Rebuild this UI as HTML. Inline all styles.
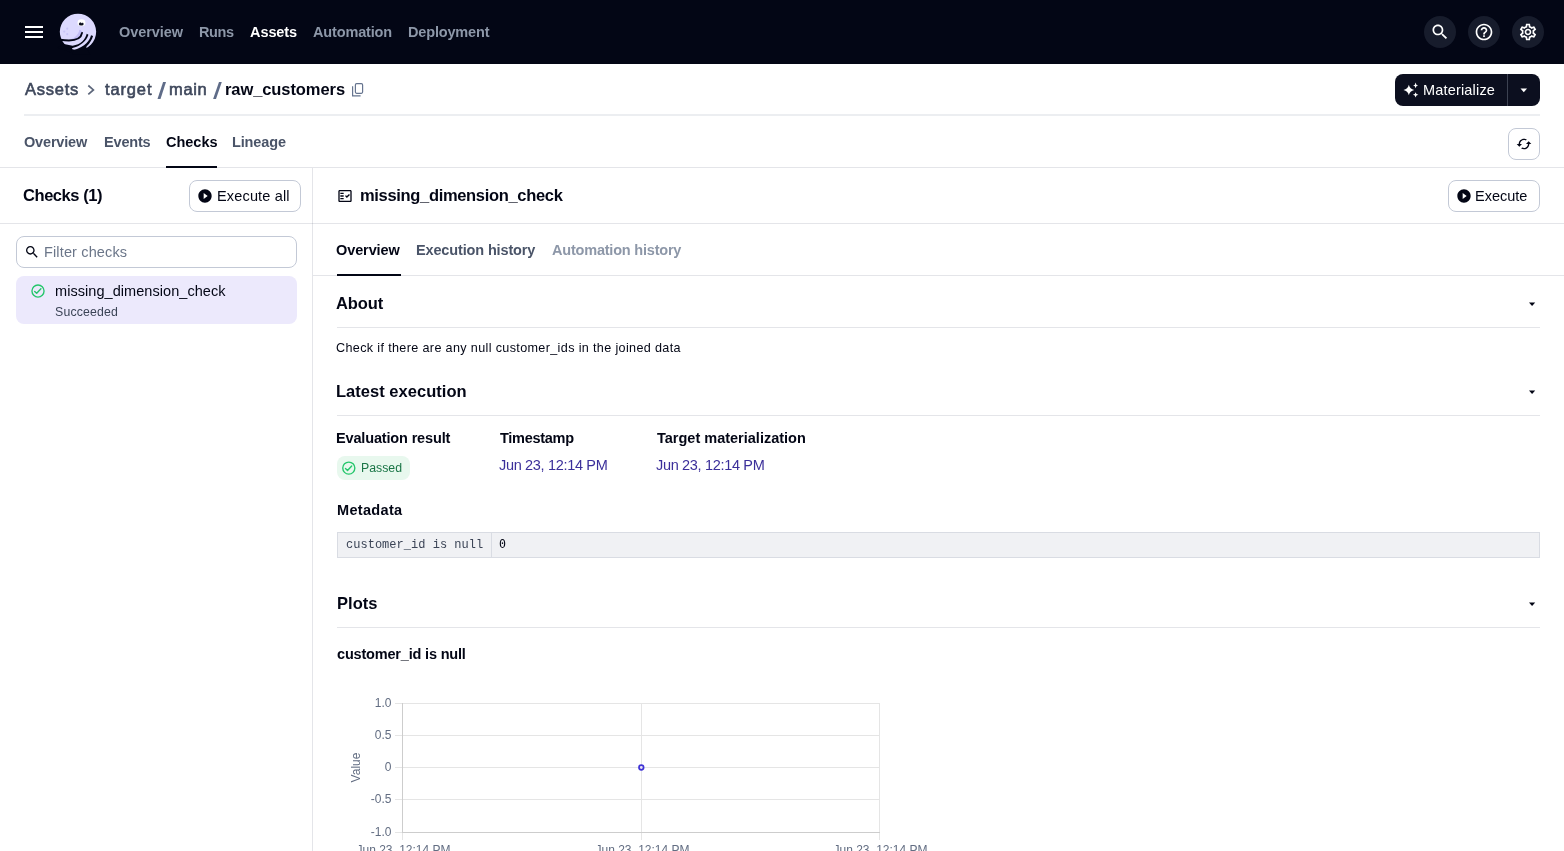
<!DOCTYPE html>
<html lang="en">
<head>
<meta charset="utf-8">
<title>raw_customers checks</title>
<style>
*{box-sizing:border-box;margin:0;padding:0}
html,body{width:1564px;height:851px;overflow:hidden;background:#fff}
body{font-family:"Liberation Sans",sans-serif;color:#030615;position:relative;font-size:14px}
.abs{position:absolute;white-space:nowrap}
div.abs{will-change:transform}
#nav{left:0;top:0;width:1564px;height:64px;background:#030615}
.circ{top:16px;width:32px;height:32px;border-radius:16px;background:#171c2c}
.hl{height:1px;background:rgba(20,30,60,0.115)}
.btn{border:1px solid #c3c9d6;border-radius:8px;background:#fff;height:32px}
svg{overflow:visible}
</style>
</head>
<body>
<!-- top nav -->
<div id="nav" class="abs"></div>
<svg class="abs" style="left:24px;top:24px" width="20" height="16" viewBox="0 0 20 16"><rect x="1" y="2" width="18" height="2" fill="#fff"/><rect x="1" y="7" width="18" height="2" fill="#fff"/><rect x="1" y="12" width="18" height="2" fill="#fff"/></svg>
<!--LOGO-->
<div class="abs circ" style="left:1424px"></div>
<div class="abs circ" style="left:1468px"></div>
<div class="abs circ" style="left:1512px"></div>
<!--NAVICONS-->

<!-- breadcrumb -->
<div class="abs" style="left:24px;top:114px;width:1516px;height:2px;background:#eceef1"></div>
<!--CRUMBICONS-->

<!-- materialize -->
<div class="abs" style="left:1395px;top:74px;width:145px;height:32px;border-radius:8px;background:#0c0f1f"></div>
<div class="abs" style="left:1507px;top:74px;width:1px;height:32px;background:#3d4252"></div>
<!--MATICONS-->

<!-- tabs -->
<div class="abs" style="left:166px;top:166px;width:51px;height:2px;background:#030615;z-index:2"></div>
<div class="abs hl" style="left:0;top:167px;width:1564px"></div>
<div class="abs btn" style="left:1508px;top:128px;width:32px"></div>

<!-- left panel -->
<div class="abs" style="left:312px;top:168px;width:1px;height:683px;background:rgba(20,30,60,0.115)"></div>
<div class="abs btn" style="left:189px;top:180px;width:112px"></div>
<div class="abs hl" style="left:0;top:223px;width:1564px"></div>
<div class="abs btn" style="left:16px;top:236px;width:281px"></div>
<div class="abs" style="left:16px;top:276px;width:281px;height:48px;border-radius:8px;background:#ece9fc"></div>

<!-- right header -->
<div class="abs btn" style="left:1448px;top:180px;width:92px"></div>

<!-- sub tabs -->
<div class="abs" style="left:337px;top:274px;width:64px;height:2px;background:#030615;z-index:2"></div>
<div class="abs hl" style="left:313px;top:275px;width:1251px"></div>

<!-- section rules -->
<div class="abs hl" style="left:337px;top:327px;width:1203px"></div>
<div class="abs hl" style="left:337px;top:415px;width:1203px"></div>
<div class="abs hl" style="left:337px;top:627px;width:1203px"></div>
<!-- badge -->
<div class="abs" style="left:337px;top:456px;width:73px;height:24px;border-radius:8px;background:#e8f8ee"></div>
<!-- Metadata table -->
<div class="abs" style="left:337px;top:532px;width:1203px;height:26px;background:#f0f1f4;border:1px solid #d9dce3"></div>
<div class="abs" style="left:491px;top:532px;width:1px;height:26px;background:#d9dce3"></div>

<svg class="abs" style="left:0;top:0" width="1564" height="851" viewBox="0 0 1564 851">
<!-- logo -->
<g transform="translate(54,8) scale(0.05643)">
<circle cx="425" cy="423" r="322" fill="#dcd9fe"/>
<path d="M450,385 C430,480 360,550 240,566 C330,600 470,560 505,430 C490,400 470,385 450,385 Z" fill="#c2bdf4"/>
<path d="M497,442 C478,555 360,602 110,562" fill="none" stroke="#030615" stroke-width="33" stroke-linecap="round"/>
<path d="M580,458 C556,556 476,652 330,668 L175,640 L60,700 L300,790 L316,730 C318,714 328,708 342,704 C470,672 570,594 610,474 Z" fill="#030615"/>
<path d="M656,484 C632,576 566,684 342,748 L330,830 L640,830 L578,712 C570,700 573,688 580,680 C636,622 674,562 692,496 Z" fill="#030615"/>
<ellipse cx="487" cy="262" rx="70" ry="62" fill="#ffffff"/>
<ellipse cx="483" cy="282" rx="43" ry="30" fill="#0b0e1d"/>
<circle cx="493" cy="256" r="13" fill="#ffffff"/>
<circle cx="235" cy="366" r="19" fill="#c9c5f8"/>
<circle cx="181" cy="418" r="19" fill="#c9c5f8"/>
<circle cx="235" cy="463" r="19" fill="#c9c5f8"/>
</g>
<!-- nav icons (20px material) -->
<g fill="#ffffff">
<path transform="translate(1430,22) scale(0.8333)" d="M15.5 14h-.79l-.28-.27C15.41 12.59 16 11.11 16 9.5 16 5.91 13.09 3 9.5 3S3 5.91 3 9.5 5.91 16 9.5 16c1.61 0 3.09-.59 4.23-1.57l.27.28v.79l5 4.99L20.49 19l-4.99-5zm-6 0C7.01 14 5 11.99 5 9.5S7.01 5 9.5 5 14 7.01 14 9.5 11.99 14 9.5 14z"/>
<path transform="translate(1474,22) scale(0.8333)" d="M11 18h2v-2h-2v2zm1-16C6.48 2 2 6.48 2 12s4.48 10 10 10 10-4.48 10-10S17.52 2 12 2zm0 18c-4.41 0-8-3.590-8-8s3.590-8 8-8 8 3.590 8 8-3.590 8-8 8zm0-14c-2.210 0-4 1.790-4 4h2c0-1.100.9-2 2-2s2 .9 2 2c0 2-3 1.750-3 5h2c0-2.250 3-2.500 3-5 0-2.210-1.790-4-4-4z"/>
<path transform="translate(1518,22) scale(0.8333)" d="M19.430 12.980c.040-.320.070-.640.070-.980 0-.340-.030-.660-.070-.980l2.110-1.650c.190-.150.240-.420.120-.640l-2-3.460c-.090-.160-.260-.250-.440-.250-.060 0-.120.010-.170.030l-2.490 1c-.520-.4-1.080-.730-1.690-.980l-.38-2.650C14.460 2.180 14.250 2 14 2h-4c-.25 0-.46.180-.49.420l-.38 2.650c-.61.250-1.170.590-1.690.980l-2.490-1c-.06-.020-.12-.030-.18-.030-.17 0-.34.090-.43.250l-2 3.460c-.13.220-.07.490.12.640l2.110 1.650c-.04.320-.07.650-.07.980 0 .33.030.66.070.98l-2.110 1.650c-.19.150-.24.420-.12.640l2 3.460c.09.160.26.250.44.250.06 0 .12-.01.170-.03l2.490-1c.52.4 1.080.73 1.690.98l.38 2.650c.03.240.24.420.49.420h4c.25 0 .46-.18.490-.42l.38-2.650c.61-.25 1.170-.59 1.690-.98l2.490 1c.06.020.12.030.18.030.17 0 .34-.09.430-.25l2-3.460c.12-.22.070-.49-.12-.64l-2.110-1.650zm-1.980-1.710c.04.310.05.520.05.730 0 .21-.02.430-.05.730l-.14 1.130.89.700 1.080.84-.7 1.210-1.270-.51-1.040-.42-.9.680c-.43.320-.84.560-1.250.73l-1.060.43-.16 1.130-.2 1.350h-1.400l-.19-1.350-.16-1.130-1.060-.43c-.43-.18-.83-.41-1.230-.71l-.91-.7-1.060.43-1.270.51-.7-1.210 1.080-.84.890-.7-.14-1.130c-.03-.31-.05-.54-.05-.74s.02-.43.05-.73l.14-1.130-.89-.7-1.080-.84.700-1.210 1.270.51 1.040.42.900-.68c.43-.32.840-.56 1.250-.73l1.060-.43.160-1.130.2-1.350h1.390l.19 1.350.16 1.130 1.060.43c.43.180.83.410 1.230.71l.91.700 1.060-.43 1.270-.51.700 1.210-1.070.85-.89.700.14 1.130zM12 8c-2.210 0-4 1.790-4 4s1.790 4 4 4 4-1.790 4-4-1.790-4-4-4zm0 6c-1.100 0-2-.9-2-2s.9-2 2-2 2 .9 2 2-.9 2-2 2z"/>
</g>
<!-- breadcrumb chevron, slashes, copy -->
<path d="M88.3,85.5 L93.4,89.9 L88.3,94.4" fill="none" stroke="#5d677b" stroke-width="1.7"/>
<path d="M163.1,82.1 L166.0,82.1 L160.5,99.1 L157.5,99.1 Z" fill="#5f6c88"/>
<path d="M219.0,82.1 L221.8,82.1 L216.0,99.1 L213.1,99.1 Z" fill="#5f6c88"/>
<rect x="355.4" y="83.7" width="7.2" height="9.6" rx="1.2" fill="none" stroke="#66748f" stroke-width="1.2"/>
<path d="M352.6,86.3 V95.9 H360.6" fill="none" stroke="#66748f" stroke-width="1.2"/>
<!-- materialize sparkles + caret -->
<g fill="#ffffff">
<path d="M1408.85,84.7 Q1409.85,89 1414.2,90 Q1409.85,91 1408.85,95.3 Q1407.85,91 1403.5,90 Q1407.85,89 1408.85,84.7 Z"/>
<path d="M1415.6,82.4 Q1415.9,85.1 1418.1,85.4 Q1415.9,85.7 1415.6,88.2 Q1415.3,85.7 1413.1,85.4 Q1415.3,85.1 1415.6,82.4 Z"/>
<path d="M1415.6,92.2 Q1415.9,94.5 1418.4,94.8 Q1415.9,95.1 1415.6,97.4 Q1415.3,95.1 1412.9,94.8 Q1415.3,94.5 1415.6,92.2 Z"/>
<path d="M1520.5,88.5 H1527.1 L1523.8,92.2 Z"/>
</g>
<!-- refresh (cached) 16px -->
<path transform="translate(1516,136) scale(0.6667)" fill="#030615" d="M19 8l-4 4h3c0 3.310-2.690 6-6 6-1.010 0-1.970-.250-2.800-.7l-1.460 1.460C8.970 19.540 10.430 20 12 20c4.420 0 8-3.580 8-8h3l-4-4zM6 12c0-3.310 2.690-6 6-6 1.010 0 1.970.25 2.800.7l1.460-1.460C15.030 4.460 13.570 4 12 4c-4.420 0-8 3.580-8 8H1l4 4 4-4H6z"/>
<!-- play circles -->
<g fill="#030615">
<path transform="translate(197,188) scale(0.6667)" d="M12 2C6.480 2 2 6.480 2 12s4.480 10 10 10 10-4.480 10-10S17.520 2 12 2zm-2 14.500v-9l6 4.500-6 4.500z"/>
<path transform="translate(1456,188) scale(0.6667)" d="M12 2C6.480 2 2 6.480 2 12s4.480 10 10 10 10-4.480 10-10S17.520 2 12 2zm-2 14.500v-9l6 4.500-6 4.500z"/>
<!-- filter search 16px -->
<path transform="translate(24,244) scale(0.6667)" d="M15.5 14h-.79l-.28-.27C15.41 12.59 16 11.11 16 9.5 16 5.91 13.09 3 9.5 3S3 5.910 3 9.5 5.910 16 9.5 16c1.610 0 3.090-.59 4.230-1.570l.27.28v.79l5 4.990L20.490 19l-4.990-5zm-6 0C7.010 14 5 11.990 5 9.5S7.010 5 9.5 5 14 7.010 14 9.5 11.990 14 9.500 14z"/>
<!-- fact_check 16px -->
<path transform="translate(337,188) scale(0.6667)" d="M20 3H4c-1.100 0-2 .9-2 2v14c0 1.100.9 2 2 2h16c1.100 0 2-.9 2-2V5c0-1.100-.9-2-2-2zm0 16H4V5h16v14zM19.410 10.420L17.990 9l-3.170 3.170-1.410-1.420L12 12.160 14.820 15zM5 7h5v2H5zM5 11h5v2H5zM5 15h5v2H5z"/>
<!-- section carets -->
<path d="M1529,302.5 H1535.2 L1532.1,305.9 Z"/>
<path d="M1529,390.5 H1535.2 L1532.1,393.9 Z"/>
<path d="M1529,602.5 H1535.2 L1532.1,605.9 Z"/>
</g>
<!-- green checks -->
<g fill="none" stroke="#24c66b" stroke-linecap="round" stroke-linejoin="round">
<circle cx="38" cy="291" r="6.05" stroke-width="1.35"/>
<path d="M34.7,291.4 L36.7,293.3 L40.9,288.8" stroke-width="1.4"/>
<circle cx="348.8" cy="468.1" r="6.05" stroke-width="1.35"/>
<path d="M345.5,468.5 L347.5,470.4 L351.7,465.9" stroke-width="1.4"/>
</g>
</svg>


<div class="abs" style="left:119.00px;top:22px;font-family:'Liberation Sans',sans-serif;font-size:14.5px;line-height:20px;letter-spacing:-0.057px;color:#8d97a8;font-weight:bold">Overview</div>
<div class="abs" style="left:199.30px;top:22px;font-family:'Liberation Sans',sans-serif;font-size:14.5px;line-height:20px;letter-spacing:-0.433px;color:#8d97a8;font-weight:bold">Runs</div>
<div class="abs" style="left:250.40px;top:22px;font-family:'Liberation Sans',sans-serif;font-size:14.5px;line-height:20px;letter-spacing:-0.080px;color:#ffffff;font-weight:bold">Assets</div>
<div class="abs" style="left:313.20px;top:22px;font-family:'Liberation Sans',sans-serif;font-size:14.5px;line-height:20px;letter-spacing:-0.156px;color:#8d97a8;font-weight:bold">Automation</div>
<div class="abs" style="left:407.50px;top:22px;font-family:'Liberation Sans',sans-serif;font-size:14.5px;line-height:20px;letter-spacing:-0.167px;color:#8d97a8;font-weight:bold">Deployment</div>
<div class="abs" style="left:24.50px;top:78px;font-family:'Liberation Sans',sans-serif;font-size:16.5px;line-height:22px;letter-spacing:0.760px;color:#3f485c;font-weight:normal;-webkit-text-stroke:0.6px #3f485c">Assets</div>
<div class="abs" style="left:104.80px;top:78px;font-family:'Liberation Sans',sans-serif;font-size:16.5px;line-height:22px;letter-spacing:0.860px;color:#3f485c;font-weight:normal;-webkit-text-stroke:0.6px #3f485c">target</div>
<div class="abs" style="left:169.30px;top:78px;font-family:'Liberation Sans',sans-serif;font-size:16.5px;line-height:22px;letter-spacing:0.667px;color:#3f485c;font-weight:normal;-webkit-text-stroke:0.6px #3f485c">main</div>
<div class="abs" style="left:225.00px;top:78px;font-family:'Liberation Sans',sans-serif;font-size:16.5px;line-height:22px;letter-spacing:-0.083px;color:#030615;font-weight:bold">raw_customers</div>
<div class="abs" style="left:1422.70px;top:80px;font-family:'Liberation Sans',sans-serif;font-size:14.5px;line-height:20px;letter-spacing:0.180px;color:#ffffff;font-weight:normal">Materialize</div>
<div class="abs" style="left:23.50px;top:132px;font-family:'Liberation Sans',sans-serif;font-size:14.5px;line-height:20px;letter-spacing:-0.171px;color:#4a5468;font-weight:bold">Overview</div>
<div class="abs" style="left:103.80px;top:132px;font-family:'Liberation Sans',sans-serif;font-size:14.5px;line-height:20px;letter-spacing:-0.180px;color:#4a5468;font-weight:bold">Events</div>
<div class="abs" style="left:165.60px;top:132px;font-family:'Liberation Sans',sans-serif;font-size:14.5px;line-height:20px;letter-spacing:-0.020px;color:#030615;font-weight:bold">Checks</div>
<div class="abs" style="left:232.40px;top:132px;font-family:'Liberation Sans',sans-serif;font-size:14.5px;line-height:20px;letter-spacing:-0.133px;color:#4a5468;font-weight:bold">Lineage</div>
<div class="abs" style="left:23.30px;top:184px;font-family:'Liberation Sans',sans-serif;font-size:16.5px;line-height:22px;letter-spacing:-0.433px;color:#030615;font-weight:bold">Checks (1)</div>
<div class="abs" style="left:216.70px;top:186px;font-family:'Liberation Sans',sans-serif;font-size:14.5px;line-height:20px;letter-spacing:0.160px;color:#030615;font-weight:normal">Execute all</div>
<div class="abs" style="left:43.70px;top:242px;font-family:'Liberation Sans',sans-serif;font-size:14.5px;line-height:20px;letter-spacing:0.142px;color:#6b7689;font-weight:normal">Filter checks</div>
<div class="abs" style="left:55.20px;top:281px;font-family:'Liberation Sans',sans-serif;font-size:14.5px;line-height:20px;letter-spacing:0.059px;color:#030615;font-weight:normal">missing_dimension_check</div>
<div class="abs" style="left:55.20px;top:303px;font-family:'Liberation Sans',sans-serif;font-size:12.3px;line-height:18px;letter-spacing:0.175px;color:#3b4456;font-weight:normal">Succeeded</div>
<div class="abs" style="left:360.40px;top:184px;font-family:'Liberation Sans',sans-serif;font-size:16.5px;line-height:22px;letter-spacing:-0.327px;color:#030615;font-weight:bold">missing_dimension_check</div>
<div class="abs" style="left:1475.40px;top:186px;font-family:'Liberation Sans',sans-serif;font-size:14.5px;line-height:20px;letter-spacing:-0.017px;color:#030615;font-weight:normal">Execute</div>
<div class="abs" style="left:336.00px;top:240px;font-family:'Liberation Sans',sans-serif;font-size:14.5px;line-height:20px;letter-spacing:-0.100px;color:#030615;font-weight:bold">Overview</div>
<div class="abs" style="left:416.30px;top:240px;font-family:'Liberation Sans',sans-serif;font-size:14.5px;line-height:20px;letter-spacing:-0.144px;color:#4a5468;font-weight:bold">Execution history</div>
<div class="abs" style="left:551.50px;top:240px;font-family:'Liberation Sans',sans-serif;font-size:14.5px;line-height:20px;letter-spacing:-0.206px;color:#8d97a8;font-weight:bold">Automation history</div>
<div class="abs" style="left:336.00px;top:292px;font-family:'Liberation Sans',sans-serif;font-size:16.5px;line-height:22px;letter-spacing:-0.100px;color:#030615;font-weight:bold">About</div>
<div class="abs" style="left:336.00px;top:339px;font-family:'Liberation Sans',sans-serif;font-size:12.6px;line-height:18px;letter-spacing:0.352px;color:#030615;font-weight:normal">Check if there are any null customer_ids in the joined data</div>
<div class="abs" style="left:336.00px;top:380px;font-family:'Liberation Sans',sans-serif;font-size:16.5px;line-height:22px;letter-spacing:0.027px;color:#030615;font-weight:bold">Latest execution</div>
<div class="abs" style="left:336.10px;top:428px;font-family:'Liberation Sans',sans-serif;font-size:14.5px;line-height:20px;letter-spacing:-0.156px;color:#030615;font-weight:bold">Evaluation result</div>
<div class="abs" style="left:499.90px;top:428px;font-family:'Liberation Sans',sans-serif;font-size:14.5px;line-height:20px;letter-spacing:-0.275px;color:#030615;font-weight:bold">Timestamp</div>
<div class="abs" style="left:656.50px;top:428px;font-family:'Liberation Sans',sans-serif;font-size:14.5px;line-height:20px;letter-spacing:0.000px;color:#030615;font-weight:bold">Target materialization</div>
<div class="abs" style="left:360.90px;top:459px;font-family:'Liberation Sans',sans-serif;font-size:12.3px;line-height:18px;letter-spacing:0.000px;color:#1b7647;font-weight:normal">Passed</div>
<div class="abs" style="left:498.90px;top:455px;font-family:'Liberation Sans',sans-serif;font-size:14.5px;line-height:20px;letter-spacing:-0.327px;color:#3b2f9a;font-weight:normal">Jun 23, 12:14 PM</div>
<div class="abs" style="left:655.50px;top:455px;font-family:'Liberation Sans',sans-serif;font-size:14.5px;line-height:20px;letter-spacing:-0.327px;color:#3b2f9a;font-weight:normal">Jun 23, 12:14 PM</div>
<div class="abs" style="left:336.50px;top:500px;font-family:'Liberation Sans',sans-serif;font-size:14.5px;line-height:20px;letter-spacing:0.329px;color:#030615;font-weight:bold">Metadata</div>
<div class="abs" style="left:346.00px;top:536px;font-family:'Liberation Mono','DejaVu Sans Mono',monospace;font-size:12.0px;line-height:18px;letter-spacing:0.022px;color:#3b4456;font-weight:normal">customer_id is null</div>
<div class="abs" style="left:498.70px;top:535px;font-family:'DejaVu Sans Mono',monospace;font-size:11.6px;line-height:18px;letter-spacing:0.000px;color:#030615;font-weight:normal">0</div>
<div class="abs" style="left:336.50px;top:592px;font-family:'Liberation Sans',sans-serif;font-size:16.5px;line-height:22px;letter-spacing:0.025px;color:#030615;font-weight:bold">Plots</div>
<div class="abs" style="left:336.50px;top:644px;font-family:'Liberation Sans',sans-serif;font-size:14.5px;line-height:20px;letter-spacing:-0.183px;color:#030615;font-weight:bold">customer_id is null</div>

<svg class="abs" style="left:0;top:0" width="1564" height="851" viewBox="0 0 1564 851" shape-rendering="crispEdges">
<g fill="#e5e5e5">
<rect x="395" y="703" width="485" height="1"/>
<rect x="395" y="735" width="485" height="1"/>
<rect x="395" y="767" width="485" height="1"/>
<rect x="395" y="799" width="485" height="1"/>
<rect x="395" y="832" width="485" height="1"/>
<rect x="402" y="703" width="1" height="137"/>
<rect x="641" y="703" width="1" height="137"/>
<rect x="879" y="703" width="1" height="137"/>
</g>
<g fill="#cdcdcd">
<rect x="402" y="703" width="1" height="130"/>
<rect x="402" y="832" width="478" height="1"/>
</g>
<g shape-rendering="auto">
<circle cx="641.3" cy="767.5" r="2.3" fill="#e6e4f4" stroke="#3f33d6" stroke-width="1.7"/>
<g font-family="'Liberation Sans',sans-serif" font-size="12" fill="#626d82">
<text x="391.5" y="707.3" text-anchor="end">1.0</text>
<text x="391.5" y="739.3" text-anchor="end">0.5</text>
<text x="391.5" y="771.3" text-anchor="end">0</text>
<text x="391.5" y="803.3" text-anchor="end">-0.5</text>
<text x="391.5" y="836.3" text-anchor="end">-1.0</text>
<text x="403.5" y="853.5" text-anchor="middle">Jun 23, 12:14 PM</text>
<text x="642.5" y="853.5" text-anchor="middle">Jun 23, 12:14 PM</text>
<text x="880.5" y="853.5" text-anchor="middle">Jun 23, 12:14 PM</text>
<text transform="translate(360.3,767.5) rotate(-90)" text-anchor="middle">Value</text>
</g>
</g>
</svg>

</body>
</html>
